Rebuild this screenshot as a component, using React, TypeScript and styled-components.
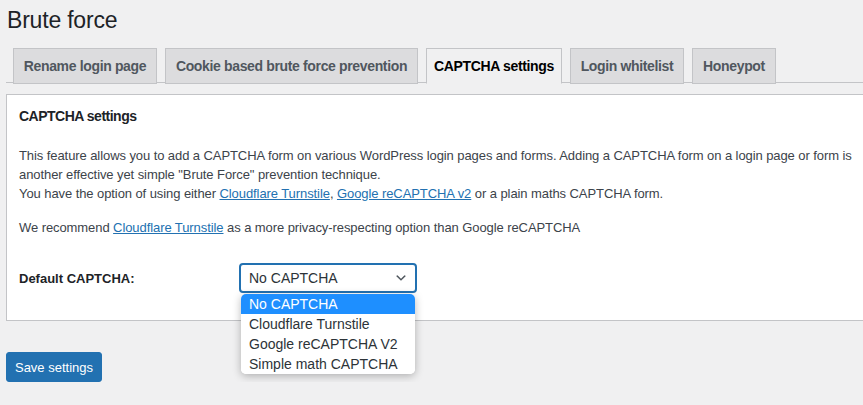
import React from 'react';
import styled, { createGlobalStyle } from 'styled-components';

const GlobalStyle = createGlobalStyle`
  html, body {
    margin: 0;
    padding: 0;
    background: #f0f0f1;
    overflow: hidden;
  }
  body {
    font-family: "Liberation Sans", Arial, sans-serif;
    font-size: 13px;
    color: #3c434a;
  }
`;

const Wrap = styled.div`
  margin: 0 -30px 0 6px;
  padding-top: 6px;
`;

const Title = styled.h1`
  margin: 0;
  font-size: 23px;
  font-weight: 400;
  line-height: 29px;
  color: #1d2327;
  padding: 0 1px 0;
  letter-spacing: -0.2px;
`;

const TabBar = styled.nav`
  display: flex;
  margin-top: 13px;
  padding-left: 7px;
  border-bottom: 1px solid #c3c4c7;
  height: 35px;
  box-sizing: border-box;
  align-items: flex-start;
`;

const Tab = styled.a<{ $active?: boolean; $w: number }>`
  box-sizing: border-box;
  width: ${(p) => p.$w}px;
  height: 36px;
  margin-right: 8px;
  border: 1px solid #c3c4c7;
  border-bottom-color: ${(p) => (p.$active ? '#f0f0f1' : '#c3c4c7')};
  background: ${(p) => (p.$active ? '#f0f0f1' : '#dcdcde')};
  color: ${(p) => (p.$active ? '#000' : '#50575e')};
  font-size: 14px;
  font-weight: 600;
  line-height: 34px;
  text-align: center;
  white-space: nowrap;
  letter-spacing: -0.35px;
  cursor: pointer;
`;

const Panel = styled.div`
  margin-top: 11px;
  background: #fff;
  border: 1px solid #c3c4c7;
  padding: 0 12px 0 12px;
  height: 227px;
  box-sizing: border-box;
`;

const PanelHeading = styled.h3`
  margin: 0;
  padding-top: 11px;
  font-size: 14px;
  font-weight: 600;
  line-height: 20px;
  color: #1d2327;
  letter-spacing: -0.5px;
`;

const Para = styled.p<{ $top: number }>`
  margin: ${(p) => p.$top}px 0 0;
  line-height: 19px;
  white-space: nowrap;
  letter-spacing: -0.08px;
`;

const Link = styled.a`
  color: #2271b1;
  text-decoration: underline;
`;

const FormRow = styled.div`
  display: flex;
  align-items: center;
  margin-top: 26px;
`;

const Label = styled.label`
  width: 220px;
  font-weight: 600;
  color: #1d2327;
  font-size: 13px;
`;

const SelectBox = styled.div`
  position: relative;
  box-sizing: border-box;
  width: 178px;
  height: 30px;
  border: 2px solid #2271b1;
  border-radius: 4px;
  display: flex;
  align-items: center;
  padding-left: 8px;
  font-size: 14px;
  color: #2c3338;
  background: #fff;
`;

const Chevron = styled.svg`
  position: absolute;
  right: 7px;
  top: 6px;
  width: 14px;
  height: 14px;
`;

const OptionList = styled.ul`
  position: absolute;
  left: 0;
  top: 29px;
  width: 174px;
  margin: 0;
  padding: 0;
  list-style: none;
  background: #fff;
  border-radius: 5px;
  overflow: hidden;
  box-shadow: 0 2px 8px rgba(0, 0, 0, 0.28);
  z-index: 2;
`;

const Option = styled.li<{ $selected?: boolean }>`
  height: 20px;
  line-height: 20px;
  padding-left: 8px;
  font-size: 14px;
  color: ${(p) => (p.$selected ? '#fff' : '#2c3338')};
  background: ${(p) => (p.$selected ? '#1e8fff' : '#fff')};
`;

const Submit = styled.div`
  margin-top: 31px;
`;

const Button = styled.button`
  box-sizing: border-box;
  height: 30px;
  width: 96px;
  padding: 0;
  border: 1px solid #2271b1;
  border-radius: 3px;
  background: #2271b1;
  color: #fff;
  font-family: inherit;
  font-size: 13px;
  cursor: pointer;
`;

const tabs = [
  { label: 'Rename login page', w: 144 },
  { label: 'Cookie based brute force prevention', w: 253 },
  { label: 'CAPTCHA settings', w: 136, active: true },
  { label: 'Login whitelist', w: 114 },
  { label: 'Honeypot', w: 84 },
];

const options = ['No CAPTCHA', 'Cloudflare Turnstile', 'Google reCAPTCHA V2', 'Simple math CAPTCHA'];

export default function App() {
  return (
    <>
      <GlobalStyle />
      <Wrap>
        <Title>Brute force</Title>
        <TabBar>
          {tabs.map((t) => (
            <Tab key={t.label} $active={t.active} $w={t.w}>
              {t.label}
            </Tab>
          ))}
        </TabBar>
        <Panel>
          <PanelHeading>CAPTCHA settings</PanelHeading>
          <Para $top={20}>
            This feature allows you to add a CAPTCHA form on various WordPress login pages and forms. Adding a CAPTCHA
            form on a login page or form is
            <br />
            another effective yet simple "Brute Force" prevention technique.
            <br />
            You have the option of using either <Link>Cloudflare Turnstile</Link>, <Link>Google reCAPTCHA v2</Link> or a
            plain maths CAPTCHA form.
          </Para>
          <Para $top={15}>
            We recommend <Link>Cloudflare Turnstile</Link> as a more privacy-respecting option than Google reCAPTCHA
          </Para>
          <FormRow>
            <Label>Default CAPTCHA:</Label>
            <SelectBox>
              No CAPTCHA
              <Chevron viewBox="0 0 20 20">
                <path d="M5 6l5 5 5-5 2 1-7 7-7-7 2-1z" fill="#50575e" />
              </Chevron>
              <OptionList>
                {options.map((o, i) => (
                  <Option key={o} $selected={i === 0}>
                    {o}
                  </Option>
                ))}
              </OptionList>
            </SelectBox>
          </FormRow>
        </Panel>
        <Submit>
          <Button>Save settings</Button>
        </Submit>
      </Wrap>
    </>
  );
}
